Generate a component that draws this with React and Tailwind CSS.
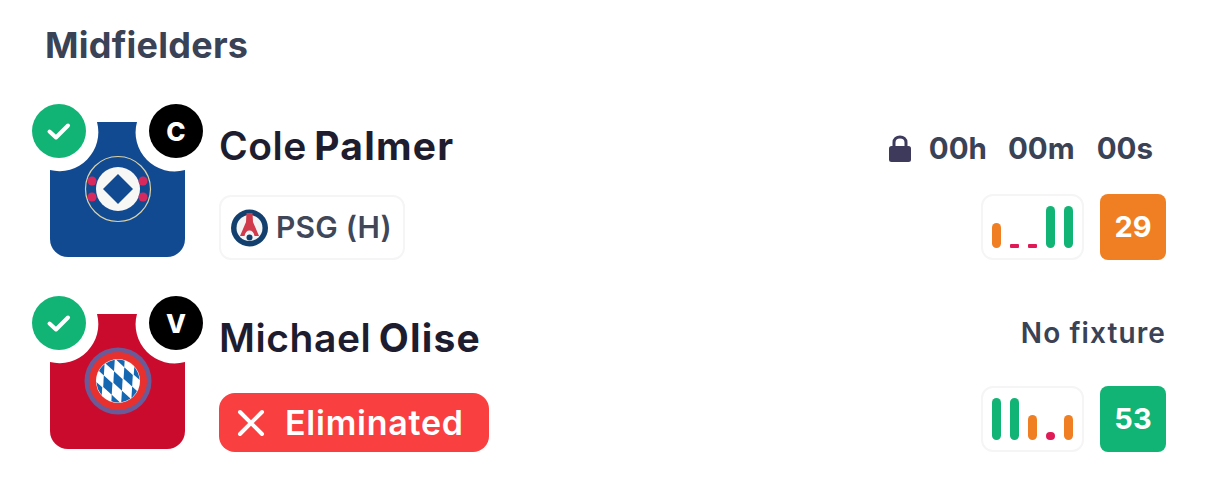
import React from 'react';

const COLORS = { g: '#12b475', o: '#f07f23', r: '#e01a57' };

const players = [
  {
    first: 'Cole',
    last: 'Palmer',
    armband: 'C',
    kit: 'psg',
    score: 29,
    scoreClass: 'bg-[#f07f23]',
    form: [
      ['o', 25],
      ['r', 4],
      ['r', 4],
      ['g', 42],
      ['g', 42],
    ],
  },
  {
    first: 'Michael',
    last: 'Olise',
    armband: 'V',
    kit: 'bayern',
    score: 53,
    scoreClass: 'bg-[#12b475]',
    form: [
      ['g', 42],
      ['g', 42],
      ['o', 25],
      ['r', 8],
      ['o', 25],
    ],
  },
];

const SHIRT_PATH =
  'M47 0H87A39 39 0 0 0 135 48V117A18 18 0 0 1 117 135H18A18 18 0 0 1 0 117V48A39 39 0 0 0 47 0Z';

// Lozenge centres for the Bayern crest, before the grid is tilted
const LOZENGES = [];
for (let col = -3; col <= 3; col++) {
  for (let row = -2; row <= 2; row++) {
    LOZENGES.push([68 + col * 11, 67 + row * 21]);
  }
}

const Shirt = ({ kit }) => {
  if (kit === 'psg') {
    return (
      <svg width="135" height="135" viewBox="0 0 135 135" className="absolute left-[18px] top-[18px]">
        <path d={SHIRT_PATH} fill="#124a92" />
        <circle cx="68" cy="67" r="32.5" fill="none" stroke="#d9d2a8" strokeWidth="1.2" />
        <circle cx="68" cy="67" r="22" fill="#f7f7f5" />
        <path d="M68 52L83 67L68 82L53 67Z" fill="#124a92" />
        <circle cx="42" cy="59" r="4.5" fill="#d8295f" />
        <circle cx="42" cy="75" r="4.5" fill="#d8295f" />
        <circle cx="93" cy="59" r="4.5" fill="#d8295f" />
        <circle cx="93" cy="75" r="4.5" fill="#d8295f" />
      </svg>
    );
  }
  return (
    <svg width="135" height="135" viewBox="0 0 135 135" className="absolute left-[18px] top-[18px]">
      <defs>
        <clipPath id="fcb">
          <circle cx="68" cy="67" r="21.5" />
        </clipPath>
      </defs>
      <path d={SHIRT_PATH} fill="#cb0b2d" />
      <circle cx="68" cy="67" r="33.5" fill="#6a5a97" />
      <circle cx="68" cy="67" r="29" fill="#e8302f" />
      <circle cx="68" cy="67" r="22" fill="#ffffff" />
      <g clipPath="url(#fcb)">
        <g transform="rotate(-22 68 67)" fill="#1467b0">
          {LOZENGES.map(([x, y]) => (
            <path key={`${x}-${y}`} d={`M${x} ${y - 10.5}L${x + 5} ${y}L${x} ${y + 10.5}L${x - 5} ${y}Z`} />
          ))}
        </g>
      </g>
    </svg>
  );
};

const PsgCrest = () => (
  <svg width="37" height="38" viewBox="0 0 37 38">
    <circle cx="18.5" cy="19" r="18.5" fill="#123f6d" />
    <circle cx="18.5" cy="19" r="13" fill="#f4f4f4" />
    <path d="M15.5 4H21.5L22 13L28 27H23.5C23 23.5 21 21.5 18.5 21.5S14 23.5 13.5 27H9L15 13Z" fill="#d03a4b" />
    <circle cx="18.5" cy="28.5" r="3" fill="#123f6d" />
  </svg>
);

const LockIcon = () => (
  <svg width="22" height="27" viewBox="0 0 22 27" className="mr-[18px]">
    <path d="M5 12V7.5C5 4 7.6 2 11 2S17 4 17 7.5V12" fill="none" stroke="#3d3a5c" strokeWidth="3" />
    <rect x="0" y="11" width="22" height="16" rx="2.5" fill="#3d3a5c" />
  </svg>
);

const PlayerRow = ({ player }) => (
  <div className="flex">
    {/* Shirt with status and armband badges */}
    <div className="relative h-[153px] w-[171px] shrink-0">
      <Shirt kit={player.kit} />
      <div className="absolute left-0 top-0 flex h-[54px] w-[54px] items-center justify-center rounded-full bg-[#12b475]">
        <svg width="28" height="28" viewBox="0 0 28 28" fill="none">
          <path d="M4.5 14.5L11 20.5L23 8.5" stroke="#fff" strokeWidth="4" strokeLinecap="round" strokeLinejoin="round" />
        </svg>
      </div>
      <div className="absolute right-0 top-0 flex h-[54px] w-[54px] items-center justify-center rounded-full bg-black text-[26px] font-extrabold text-white">
        {player.armband}
      </div>
    </div>

    <div className="ml-4 flex h-[156px] flex-1 flex-col justify-between pt-[19px]">
      <div className="flex h-[46px] items-center justify-between">
        <h3 className="text-[39px] font-semibold leading-[46px] tracking-[0.55px] text-[#1d1d2f] [word-spacing:-3px]">
          {player.first} <span className="font-bold tracking-[1.2px]">{player.last}</span>
        </h3>
        {player.kit === 'psg' ? (
          <div className="mt-1 flex items-center pr-[13px] text-[29.5px] font-bold text-[#3a4256]">
            <LockIcon />
            <span>00h</span>
            <span className="ml-[21px]">00m</span>
            <span className="ml-[22px]">00s</span>
          </div>
        ) : (
          <div className="mb-[10px] text-[28px] font-semibold tracking-[1.1px] text-[#3a4256]">No fixture</div>
        )}
      </div>

      <div className="flex items-end justify-between">
        {player.kit === 'psg' ? (
          <div className="flex h-[65px] items-center gap-[8px] rounded-xl border-2 border-[#f5f5f6] pl-[10px] pr-[11px] text-[30px] font-semibold tracking-[0.2px] text-[#3f4759]">
            <PsgCrest />
            PSG (H)
          </div>
        ) : (
          <div className="flex h-[59px] items-center gap-[19px] rounded-2xl bg-[#f93f3f] pl-[17px] pr-[25px] text-[34px] font-semibold tracking-[0.75px] text-white">
            <svg width="30" height="30" viewBox="0 0 30 30" fill="none">
              <path d="M4 4L26 26M26 4L4 26" stroke="#fff" strokeWidth="4" strokeLinecap="round" />
            </svg>
            Eliminated
          </div>
        )}

        <div className="flex gap-4">
          <div className="flex h-[66px] w-[103px] items-end gap-[9px] rounded-xl border-2 border-[#f5f5f6] pb-[10px] pl-[9px]">
            {player.form.map(([color, height], i) => (
              <span
                key={i}
                className="w-[9px] rounded-full"
                style={{ height, backgroundColor: COLORS[color], borderRadius: height < 6 ? 1 : 999 }}
              />
            ))}
          </div>
          <div className={`flex h-[66px] w-[66px] items-center justify-center rounded-lg text-[29px] font-bold text-white ${player.scoreClass}`}>
            {player.score}
          </div>
        </div>
      </div>
    </div>
  </div>
);

const App = () => (
  <div className="h-[484px] w-[1217px] overflow-hidden bg-white pl-[32px] pr-[51px] pt-[22px] font-['Inter','Noto_Sans',sans-serif]">
    <h2 className="ml-[13px] h-[82px] text-[36px] font-bold leading-[46px] tracking-[0.25px] text-[#3a4256]">Midfielders</h2>
    <div className="flex flex-col gap-[36px]">
      {players.map((player) => (
        <PlayerRow key={player.last} player={player} />
      ))}
    </div>
  </div>
);

export default App;
